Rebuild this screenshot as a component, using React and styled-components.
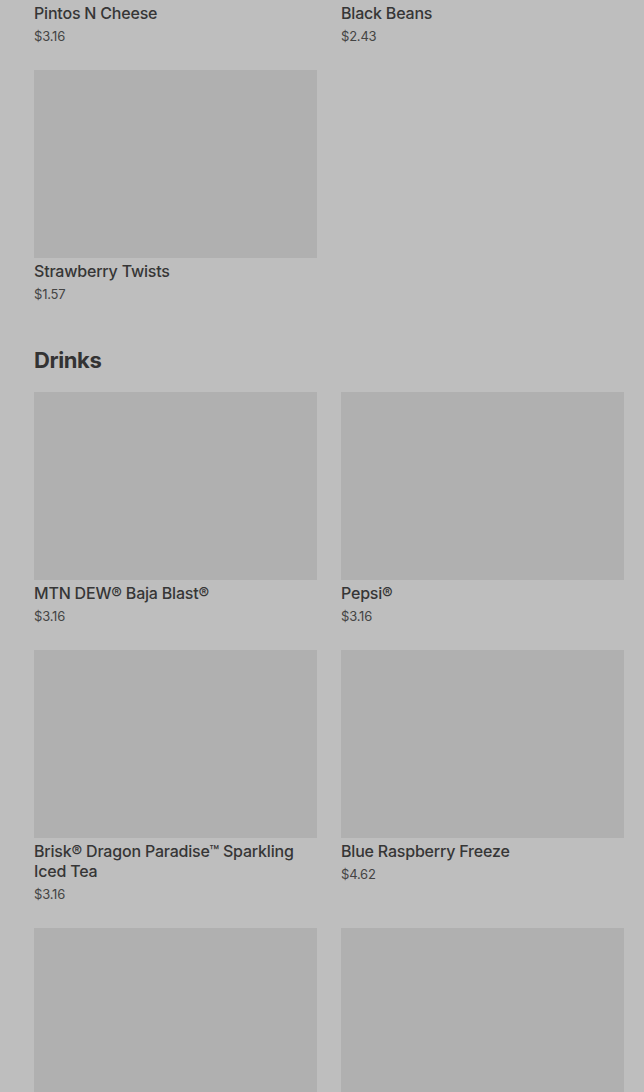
import React from 'react'
import styled, { createGlobalStyle } from 'styled-components'

const Global = createGlobalStyle`
  html, body {
    margin: 0;
    padding: 0;
    background: #bebebe;
    overflow: hidden;
  }
  body {
    font-family: Inter, "Noto Sans", "Liberation Sans", sans-serif;
    color: #333333;
  }
`

const sides = [
  { name: 'Pintos N Cheese', price: '$3.16' },
  { name: 'Black Beans', price: '$2.43' },
  { name: 'Strawberry Twists', price: '$1.57' },
]

const drinks = [
  { name: 'MTN DEW® Baja Blast®', price: '$3.16' },
  { name: 'Pepsi®', price: '$3.16' },
  { name: 'Brisk® Dragon Paradise™ Sparkling Iced Tea', price: '$3.16' },
  { name: 'Blue Raspberry Freeze', price: '$4.62' },
  { name: 'Diet Pepsi®', price: '$3.16' },
  { name: 'Starry®', price: '$3.16' },
]

const App = () => {
  return (
    <>
      <Global />
      <Viewport>
        <Page>
          <Section>
            <Grid>
              {sides.map((item) => (
                <Card key={item.name} item={item} />
              ))}
            </Grid>
          </Section>
          <Section>
            <Heading>Drinks</Heading>
            <Grid>
              {drinks.map((item) => (
                <Card key={item.name} item={item} />
              ))}
            </Grid>
          </Section>
        </Page>
      </Viewport>
    </>
  )
}

const Card = ({ item }) => (
  <Item>
    <Thumb />
    <Name>{item.name}</Name>
    <Price>{item.price}</Price>
  </Item>
)

export default App

const Viewport = styled.div`
  height: 1092px;
  overflow: hidden;
`

const Page = styled.div`
  display: flex;
  flex-direction: column;
  gap: 40px;
  padding: 0 20px 0 34px;
  margin-top: -188px;
`

const Section = styled.section`
  display: flex;
  flex-direction: column;
`

const Heading = styled.h2`
  margin: 0 0 16px;
  font-size: 22px;
  line-height: 32px;
  font-weight: 700;
  letter-spacing: -0.4px;
  color: #333333;
`

const Grid = styled.div`
  display: grid;
  grid-template-columns: 283px 283px;
  column-gap: 24px;
  row-gap: 24px;
`

const Item = styled.div`
  display: flex;
  flex-direction: column;
`

const Thumb = styled.div`
  height: 188px;
  background: #b0b0b0;
`

const Name = styled.div`
  margin-top: 3px;
  font-size: 16px;
  line-height: 20px;
  font-weight: 500;
  letter-spacing: -0.2px;
  color: #363636;
`

const Price = styled.div`
  margin-top: 3px;
  font-size: 13px;
  line-height: 20px;
  font-weight: 400;
  letter-spacing: -0.2px;
  color: #444444;
`
